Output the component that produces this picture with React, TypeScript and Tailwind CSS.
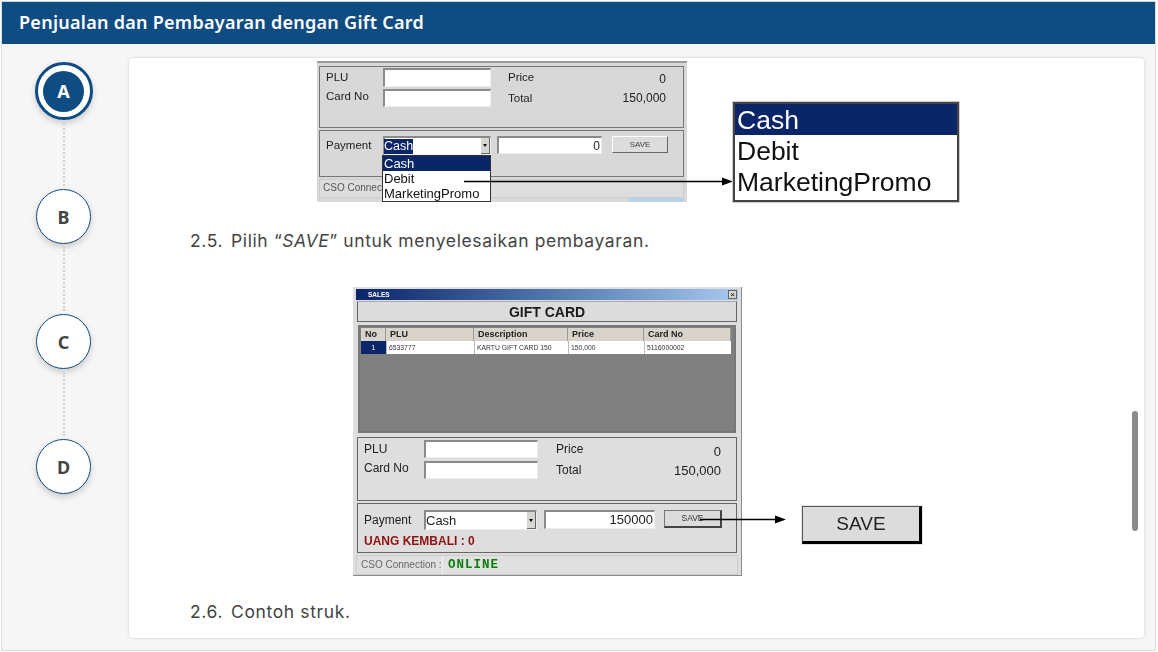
const sans = "font-['Liberation_Sans',Arial,sans-serif]";

function Input({ className = "", children }: { className?: string; children?: React.ReactNode }) {
  return (
    <div className={`flex items-center bg-white border-t-2 border-l-2 border-t-[#8a8a8a] border-l-[#8a8a8a] border-r border-b border-r-[#eeeeee] border-b-[#eeeeee] ${className}`}>
      {children}
    </div>
  );
}

function Caret({ className = "" }: { className?: string }) {
  return (
    <div className={`flex items-center justify-center bg-[#d8d6d0] border-r border-b border-[#666666] ${className}`}>
      <div className="w-0 h-0 border-l-[2px] border-r-[2px] border-t-[3px] border-l-transparent border-r-transparent border-t-black" />
    </div>
  );
}

function Arrow({ className = "", width }: { className?: string; width: number }) {
  return (
    <svg className={className} width={width} height={11} viewBox={`0 0 ${width} 11`}>
      <line x1="0" y1="5.5" x2={width - 9} y2="5.5" stroke="#000" strokeWidth="1.4" />
      <polygon points={`${width - 11},1.5 ${width},5.5 ${width - 11},9.5`} fill="#000" />
    </svg>
  );
}

function SmallWindow() {
  return (
    <div className={`${sans} relative w-[370px] h-[141px] bg-[#d8d8d8] text-[#222222] text-[11.5px] border-t-2 border-[#9a9a9a] flex flex-col pt-[3px] pl-[2px] pr-[3px] shrink-0 blur-[0.35px]`}>
      <div className="h-[62px] border border-[#777777] flex">
        <div className="w-[63px] pl-[6px] pt-[3px] flex flex-col gap-[5px] leading-[14px]">
          <span>PLU</span>
          <span>Card No</span>
        </div>
        <div className="w-[108px] pt-[1px] flex flex-col gap-[2px]">
          <Input className="h-[19px]" />
          <Input className="h-[18px]" />
        </div>
        <div className="ml-[17px] w-[158px] pt-[3px] flex flex-col gap-[5px] leading-[14px]">
          <div className="flex justify-between"><span>Price</span><span className="pt-[2px] text-[12px]">0</span></div>
          <div className="flex justify-between"><span>Total</span><span className="text-[12px]">150,000</span></div>
        </div>
      </div>
      <div className="mt-[2px] h-[47px] border border-[#777777] flex pt-[5px]">
        <div className="w-[63px] pl-[6px] pt-[2px] leading-[14px]">Payment</div>
        <Input className="w-[108px] h-[19px] justify-between items-stretch">
          <span className="self-center -ml-[1px] bg-[#0a2568] text-white text-[12.5px] leading-[15px]">Cash</span>
          <Caret className="w-[9px]" />
        </Input>
        <Input className="ml-[6px] w-[105px] h-[18px] justify-end pr-[1px] text-[12px]">0</Input>
        <div className="ml-[10px] w-[56px] h-[17px] bg-[#dcdcdc] border-r border-b border-[#666666] border-t border-l border-t-white border-l-white flex items-center justify-center text-[8px] text-[#444444]">SAVE</div>
      </div>
      <div className="mt-[2px] h-[19px] bg-[#dddddd] border border-[#cccccc] pl-[3px] text-[10px] text-[#555555] leading-[16px]">CSO Connecti</div>
      <div className="flex-1 flex justify-end"><div className="w-[55px] bg-[#bcd0e8]" /></div>
      <div className="absolute left-[65px] top-[92px] w-[109px] h-[47px] bg-white border border-[#333333] text-[13px] leading-[15px] text-[#111111] flex flex-col">
        <span className="h-[15px] bg-[#0a2568] text-white pl-[1px]">Cash</span>
        <span className="h-[15px] pl-[1px]">Debit</span>
        <span className="h-[15px] pl-[1px]">MarketingPromo</span>
      </div>
    </div>
  );
}

function BigList() {
  return (
    <div className={`${sans} w-[226px] h-[100px] bg-white border-2 border-[#444444] text-[#111111] text-[26.5px] leading-[33px] flex flex-col shrink-0 outline outline-[#cccccc] blur-[0.35px]`}>
      <span className="bg-[#0a2568] text-white pl-[2px] h-[31px]">Cash</span>
      <span className="pl-[2px] h-[31px]">Debit</span>
      <span className="pl-[2px] h-[31px]">MarketingPromo</span>
    </div>
  );
}

function BigWindow() {
  const cols = ["w-[25px]", "w-[88px]", "w-[94px]", "w-[76px]", "w-[87px]"];
  const heads = ["No", "PLU", "Description", "Price", "Card No"];
  const cells = ["6533777", "KARTU GIFT CARD 150", "150,000", "5116000002"];
  return (
    <div className={`${sans} w-[389px] h-[289px] bg-[#dedede] border-r border-b border-[#8a8a8a] flex flex-col px-[4px] pt-[2px] text-[#222222] text-[12px] shrink-0 blur-[0.35px]`}>
      <div className="-mx-[1px] h-[11px] bg-gradient-to-r from-[#0a246a] to-[#a6caf0] flex items-center justify-between pl-[12px] pr-[1px] text-white text-[6.5px] font-bold">
        <span>SALES</span>
        <span className="w-[9px] h-[9px] bg-[#d8d6d0] border border-[#666666] text-black leading-[7px] text-center text-[8px] font-normal">×</span>
      </div>
      <div className="mt-[1px] h-[21px] border border-[#666666] border-t-[#aaaaaa] flex items-center justify-center pt-[2px] font-bold text-[14px] text-[#1a1a1a] bg-[#dcdcdc]">GIFT CARD</div>
      <div className="mt-[3px] mx-[1px] h-[109px] border-2 border-[#777777] bg-[#808080] p-[1px] flex flex-col">
        <div className="flex h-[13px] bg-[#d8d4cc] w-[370px] font-bold text-[9px] text-[#222222] leading-[12px]">
          {heads.map((h, i) => (
            <div key={h} className={`${cols[i]} pl-[4px] border-r border-[#999999]`}>{h}</div>
          ))}
        </div>
        <div className="flex h-[13px] bg-white w-[370px] text-[6.8px] leading-[13px] text-[#333333]">
          <div className={`${cols[0]} bg-[#0a2568] text-white text-center`}>1</div>
          {cells.map((c, i) => (
            <div key={c} className={`${cols[i + 1]} pl-[2px] border-l border-[#bbbbbb]`}>{c}</div>
          ))}
        </div>
      </div>
      <div className="mt-[4px] h-[64px] border border-[#666666] flex">
        <div className="w-[66px] pl-[6px] pt-[4px] flex flex-col gap-[4px] leading-[15px]">
          <span>PLU</span>
          <span>Card No</span>
        </div>
        <div className="w-[114px] pt-[2px] flex flex-col gap-[3px]">
          <Input className="h-[18px]" />
          <Input className="h-[18px]" />
        </div>
        <div className="ml-[18px] w-[165px] pt-[4px] flex flex-col gap-[4px] leading-[15px]">
          <div className="flex justify-between"><span>Price</span><span className="pt-[2px] text-[13px]">0</span></div>
          <div className="flex justify-between"><span>Total</span><span className="text-[13px]">150,000</span></div>
        </div>
      </div>
      <div className="mt-[2px] h-[50px] border border-[#666666] flex flex-col pt-[6px]">
        <div className="flex">
          <div className="w-[66px] pl-[6px] pt-[3px] leading-[15px]">Payment</div>
          <Input className="w-[113px] h-[20px] justify-between items-stretch text-[13px]">
            <span className="self-center">Cash</span>
            <Caret className="w-[9px]" />
          </Input>
          <Input className="ml-[7px] w-[111px] h-[19px] justify-end pr-[1px] text-[13px]">150000</Input>
          <div className="ml-[9px] w-[58px] h-[18px] bg-[#dcdcdc] border-r-2 border-b-2 border-[#444444] border-t border-l border-t-[#777777] border-l-[#777777] flex items-center justify-center text-[8.5px] text-[#333333]">SAVE</div>
        </div>
        <div className="pl-[6px] mt-[4px] text-[12px] font-bold text-[#8f1010] leading-[15px]">UANG KEMBALI : 0</div>
      </div>
      <div className="mt-[2px] -mx-[1px] h-[20px] flex border border-[#cccccc] bg-[#e0e0e0] items-center">
        <div className="w-[86px] pl-[4px] text-[10px] text-[#666666] border-r border-[#f2f2f2] h-full leading-[18px]">CSO Connection :</div>
        <div className="pl-[5px] font-['Liberation_Mono',monospace] font-bold text-[12.5px] tracking-[1px] text-[#0a7d0a]">ONLINE</div>
      </div>
    </div>
  );
}

function BigSave() {
  return (
    <div className={`${sans} w-[120px] h-[38px] bg-[#dcdcdc] border-t border-l border-[#555555] border-r-[3px] border-b-[3px] border-r-black border-b-black outline outline-[#e4e4e4] flex items-center justify-center text-[19px] text-[#222222] shrink-0 blur-[0.35px]`}>
      SAVE
    </div>
  );
}

function Para({ num, children }: { num: string; children: React.ReactNode }) {
  return (
    <p className="flex font-['Inter',sans-serif] text-[17.5px] leading-[24px] tracking-[0.62px] text-[#444444] whitespace-pre">
      <span className="w-[41px] shrink-0">{num}</span>
      <span>{children}</span>
    </p>
  );
}

function Step({ label }: { label: string }) {
  return (
    <div className="w-[55px] h-[55px] pt-[2px] rounded-full bg-white border border-[#0f4c81] shadow-[0_3px_6px_rgba(0,0,0,0.18)] flex items-center justify-center text-[18px] font-bold text-[#444444] font-['Noto_Sans',sans-serif] shrink-0">
      {label}
    </div>
  );
}

function Dots({ h }: { h: string }) {
  return <div className={`${h} w-0 border-l-2 border-dotted border-[#d0d0d0] my-[3px]`} />;
}

export default function App() {
  return (
    <div className="w-[1158px] h-[652px] bg-white overflow-hidden pt-[1px] pl-[1px]">
      <div className="w-[1155px] h-[650px] border border-[#dddddd] border-t-[#c9d6e2] bg-[#f6f6f6] flex flex-col">
        <header className="h-[42px] shrink-0 bg-[#0f4c81] flex items-center pl-[17px] pb-[2px] text-white text-[18px] font-semibold tracking-[0.27px] font-['Noto_Sans',sans-serif]">
          Penjualan dan Pembayaran dengan Gift Card
        </header>
        <div className="flex-1 flex min-h-0">
          <nav className="w-[126px] shrink-0 flex flex-col items-center pt-[18px] pr-[3px]">
            <div className="w-[58px] h-[58px] rounded-full bg-white border-[3px] border-[#0f4c81] shadow-[0_3px_6px_rgba(0,0,0,0.18)] flex items-center justify-center shrink-0">
              <div className="w-[41px] h-[41px] pt-[1px] rounded-full bg-[#0f4c81] flex items-center justify-center text-white text-[18px] font-bold font-['Noto_Sans',sans-serif]">A</div>
            </div>
            <Dots h="h-[63px]" />
            <Step label="B" />
            <Dots h="h-[64px]" />
            <Step label="C" />
            <Dots h="h-[64px]" />
            <Step label="D" />
          </nav>
          <main className="relative w-[1017px] h-[582px] mt-[13px] bg-white rounded-[5px] border border-[#e6e6e6] shadow-[0_0_4px_rgba(0,0,0,0.06)] overflow-hidden flex flex-col">
            <div className="pl-[188px] pt-[3px] flex items-start">
              <SmallWindow />
              <Arrow width={269} className="absolute left-[335px] top-[118px]" />
              <div className="ml-[46px] mt-[41px]"><BigList /></div>
            </div>
            <div className="pl-[61px] mt-[27px]">
              <Para num="2.5.">Pilih “<i>SAVE</i>” untuk menyelesaikan pembayaran.</Para>
            </div>
            <div className="pl-[224px] mt-[34px] flex items-start">
              <BigWindow />
              <Arrow width={86} className="absolute left-[571px] top-[456px]" />
              <div className="ml-[60px] mt-[219px]"><BigSave /></div>
            </div>
            <div className="pl-[61px] mt-[24px]">
              <Para num="2.6.">Contoh struk.</Para>
            </div>
            <div className="absolute right-[6px] top-[353px] w-[6px] h-[120px] rounded-full bg-[#8c8c8c]" />
          </main>
        </div>
      </div>
    </div>
  );
}
